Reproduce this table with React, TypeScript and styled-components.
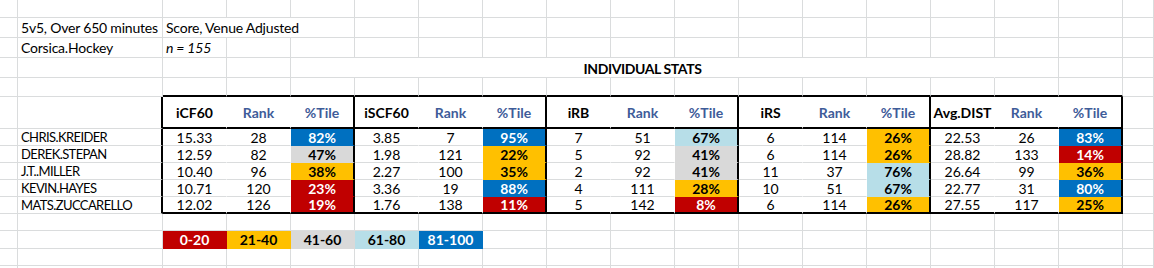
import React from 'react';
import styled, { createGlobalStyle } from 'styled-components';

type Edge = 'grid' | 'thick' | 'none';
type Tone = 'R' | 'Y' | 'G' | 'L' | 'B';

const GlobalStyle = createGlobalStyle`
  html, body {
    margin: 0;
    padding: 0;
    background: #ffffff;
    overflow: hidden;
  }
  body {
    font-family: Lato, "Open Sans", "Liberation Sans", sans-serif;
    font-size: 14px;
    color: #000;
  }
`;

const tones: Record<Tone, { bg: string; fg: string }> = {
  R: { bg: '#C00000', fg: '#ffffff' },
  Y: { bg: '#FFC000', fg: '#000000' },
  G: { bg: '#D9D9D9', fg: '#000000' },
  L: { bg: '#B7DEE8', fg: '#000000' },
  B: { bg: '#0070C0', fg: '#ffffff' },
};

const edge = (e: Edge) => {
  if (e === 'thick') return '2px solid #000';
  if (e === 'none') return '1px solid transparent';
  return '1px solid #dadcdd';
};

const Sheet = styled.div`
  display: grid;
  width: 100vw;
  height: 268px;
  overflow: hidden;
  grid-template-columns: 18px 145px repeat(15, 64px) minmax(0, 1fr);
  grid-template-rows: 18px 20px 20px 20px 19px 32px repeat(6, 17px) 18px 17px 3px;
`;

const Cell = styled.div<{ $span?: number; $right?: Edge; $bottom?: Edge }>`
  grid-column: span ${p => p.$span ?? 1};
  box-sizing: border-box;
  display: flex;
  align-items: center;
  justify-content: center;
  padding: 0 3px;
  white-space: nowrap;
  overflow: hidden;
  background: #fff;
  border-right: ${p => edge(p.$right ?? 'grid')};
  border-bottom: ${p => edge(p.$bottom ?? 'grid')};
`;

const LabelCell = styled(Cell)<{ $italic?: boolean }>`
  justify-content: flex-start;
  letter-spacing: -0.2px;
  font-style: ${p => (p.$italic ? 'italic' : 'normal')};
`;

const NameCell = styled(LabelCell)`
  font-size: 13px;
  letter-spacing: -0.6px;
`;

const TitleCell = styled(Cell)`
  font-weight: 700;
  letter-spacing: -0.4px;
  padding-top: 2px;
`;

const HeadCell = styled(Cell)<{ $stat?: boolean }>`
  font-weight: 700;
  color: ${p => (p.$stat ? '#000' : '#3E5C99')};
`;

const ValueCell = styled(Cell)``;

const PctCell = styled(Cell)<{ $tone: Tone }>`
  font-weight: 700;
  background: ${p => tones[p.$tone].bg};
  color: ${p => tones[p.$tone].fg};
`;

const LegendCell = styled(Cell)<{ $tone: Tone }>`
  font-weight: 700;
  background: ${p => tones[p.$tone].bg};
  color: ${p => tones[p.$tone].fg};
`;

const headers = ['iCF60', 'iSCF60', 'iRB', 'iRS', 'Avg.DIST'];

type Stat = [string, string, string, Tone];

const players: { name: string; stats: Stat[] }[] = [
  {
    name: 'CHRIS.KREIDER',
    stats: [
      ['15.33', '28', '82%', 'B'],
      ['3.85', '7', '95%', 'B'],
      ['7', '51', '67%', 'L'],
      ['6', '114', '26%', 'Y'],
      ['22.53', '26', '83%', 'B'],
    ],
  },
  {
    name: 'DEREK.STEPAN',
    stats: [
      ['12.59', '82', '47%', 'G'],
      ['1.98', '121', '22%', 'Y'],
      ['5', '92', '41%', 'G'],
      ['6', '114', '26%', 'Y'],
      ['28.82', '133', '14%', 'R'],
    ],
  },
  {
    name: 'J.T..MILLER',
    stats: [
      ['10.40', '96', '38%', 'Y'],
      ['2.27', '100', '35%', 'Y'],
      ['2', '92', '41%', 'G'],
      ['11', '37', '76%', 'L'],
      ['26.64', '99', '36%', 'Y'],
    ],
  },
  {
    name: 'KEVIN.HAYES',
    stats: [
      ['10.71', '120', '23%', 'R'],
      ['3.36', '19', '88%', 'B'],
      ['4', '111', '28%', 'Y'],
      ['10', '51', '67%', 'L'],
      ['22.77', '31', '80%', 'B'],
    ],
  },
  {
    name: 'MATS.ZUCCARELLO',
    stats: [
      ['12.02', '126', '19%', 'R'],
      ['1.76', '138', '11%', 'R'],
      ['5', '142', '8%', 'R'],
      ['6', '114', '26%', 'Y'],
      ['27.55', '117', '25%', 'Y'],
    ],
  },
];

const legend: [string, Tone][] = [
  ['0-20', 'R'],
  ['21-40', 'Y'],
  ['41-60', 'G'],
  ['61-80', 'L'],
  ['81-100', 'B'],
];

const blanks = (key: string, n: number, bottom: Edge = 'grid') =>
  Array.from({ length: n }, (_, i) => <Cell key={`${key}-${i}`} $bottom={bottom} />);

const App: React.FC = () => {
  return (
    <>
      <GlobalStyle />
      <Sheet>
        {/* row 1 */}
        {blanks('r1', 18)}

        {/* row 2 */}
        <Cell />
        <LabelCell>5v5, Over 650 minutes</LabelCell>
        <LabelCell $span={3}>Score, Venue Adjusted</LabelCell>
        {blanks('r2', 13)}

        {/* row 3 */}
        <Cell />
        <LabelCell>Corsica.Hockey</LabelCell>
        <LabelCell $italic>n = 155</LabelCell>
        {blanks('r3', 15)}

        {/* row 4 */}
        {blanks('r4a', 4)}
        <TitleCell $span={11} $right="none">INDIVIDUAL STATS</TitleCell>
        {blanks('r4b', 3)}

        {/* row 5, table top edge */}
        {blanks('r5a', 2)}
        {blanks('r5b', 15, 'thick')}
        <Cell />

        {/* header row */}
        <Cell />
        <Cell $right="thick" />
        {headers.map(h => (
          <React.Fragment key={h}>
            <HeadCell $stat $right="none" $bottom="thick">{h}</HeadCell>
            <HeadCell $right="none" $bottom="thick">Rank</HeadCell>
            <HeadCell $right="thick" $bottom="thick">%Tile</HeadCell>
          </React.Fragment>
        ))}
        <Cell />

        {/* player rows */}
        {players.map((p, r) => {
          const last = r === players.length - 1;
          const bottom: Edge = last ? 'thick' : 'grid';
          return (
            <React.Fragment key={p.name}>
              <Cell />
              <NameCell $right="thick">{p.name}</NameCell>
              {p.stats.map(([v, rank, pct, tone], g) => (
                <React.Fragment key={g}>
                  <ValueCell $right="none" $bottom={bottom}>{v}</ValueCell>
                  <ValueCell $right="none" $bottom={bottom}>{rank}</ValueCell>
                  <PctCell $tone={tone} $right="thick" $bottom={last ? 'thick' : 'none'}>
                    {pct}
                  </PctCell>
                </React.Fragment>
              ))}
              <Cell />
            </React.Fragment>
          );
        })}

        {/* spacer row */}
        {blanks('r12', 18)}

        {/* legend row */}
        {blanks('r13a', 2)}
        {legend.map(([label, tone]) => (
          <LegendCell key={label} $tone={tone} $right="none" $bottom="none">
            {label}
          </LegendCell>
        ))}
        {blanks('r13b', 11)}

        {/* trailing rows */}
        {blanks('r14', 18)}
        {blanks('r15', 18)}
      </Sheet>
    </>
  );
};

export default App;
